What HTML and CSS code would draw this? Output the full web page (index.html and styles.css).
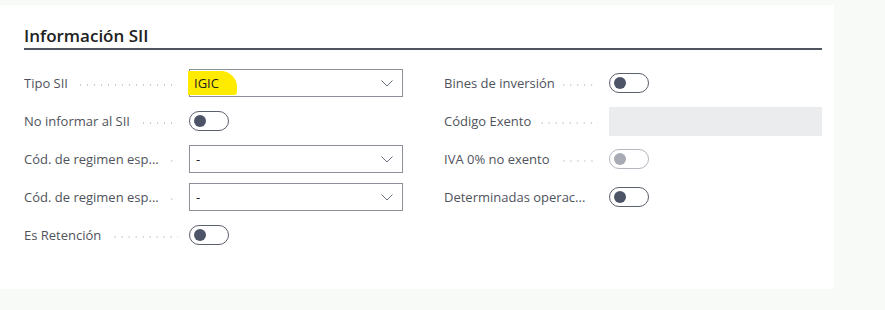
FILE: index.html
```html
<!DOCTYPE html>
<html lang="es">
<head>
<meta charset="utf-8">
<link rel="stylesheet" href="styles.css">
</head>
<body>
<div class="page">
  <section class="card">
    <h2 class="title">Información SII</h2>
    <div class="grid">
      <div class="col">
        <div class="field">
          <div class="label"><span class="text">Tipo SII</span><span class="dots"></span></div>
          <div class="select"><span class="value hl">IGIC</span>
            <svg class="chev" width="12" height="7" viewBox="0 0 12 7"><path d="M0.5 0.5 L6 6 L11.5 0.5" fill="none" stroke="#6a7080" stroke-width="1"/></svg>
          </div>
        </div>
        <div class="field">
          <div class="label"><span class="text">No informar al SII</span><span class="dots"></span></div>
          <div class="toggle"><span class="knob"></span></div>
        </div>
        <div class="field">
          <div class="label"><span class="text">Cód. de regimen esp...</span><span class="dots"></span></div>
          <div class="select"><span class="value">-</span>
            <svg class="chev" width="12" height="7" viewBox="0 0 12 7"><path d="M0.5 0.5 L6 6 L11.5 0.5" fill="none" stroke="#6a7080" stroke-width="1"/></svg>
          </div>
        </div>
        <div class="field">
          <div class="label"><span class="text">Cód. de regimen esp...</span><span class="dots"></span></div>
          <div class="select"><span class="value">-</span>
            <svg class="chev" width="12" height="7" viewBox="0 0 12 7"><path d="M0.5 0.5 L6 6 L11.5 0.5" fill="none" stroke="#6a7080" stroke-width="1"/></svg>
          </div>
        </div>
        <div class="field">
          <div class="label"><span class="text">Es Retención</span><span class="dots"></span></div>
          <div class="toggle"><span class="knob"></span></div>
        </div>
      </div>
      <div class="col">
        <div class="field">
          <div class="label"><span class="text">Bines de inversión</span><span class="dots"></span></div>
          <div class="toggle"><span class="knob"></span></div>
        </div>
        <div class="field">
          <div class="label"><span class="text">Código Exento</span><span class="dots"></span></div>
          <div class="readonly"></div>
        </div>
        <div class="field">
          <div class="label"><span class="text">IVA 0% no exento</span><span class="dots"></span></div>
          <div class="toggle disabled"><span class="knob"></span></div>
        </div>
        <div class="field">
          <div class="label"><span class="text">Determinadas operac...</span><span class="dots"></span></div>
          <div class="toggle"><span class="knob"></span></div>
        </div>
      </div>
    </div>
  </section>
</div>
</body>
</html>
```

FILE: styles.css
```css
html, body {
  margin: 0;
  padding: 0;
  background: #f8faf7;
  width: 885px;
  height: 310px;
  overflow: hidden;
  font-family: "Open Sans", "Noto Sans", sans-serif;
}
.page {
  padding-top: 5px;
}
.card {
  width: 834px;
  height: 284px;
  box-sizing: border-box;
  background: #ffffff;
  padding: 0 12px 0 24px;
}
.title {
  margin: 0;
  padding-top: 19px;
  height: 24px;
  font-size: 17px;
  font-weight: 600;
  color: #212121;
  line-height: 24px;
  border-bottom: 2px solid #50545f;
  padding-bottom: 0;
}
.grid {
  display: grid;
  grid-template-columns: 379px 378px;
  column-gap: 41px;
  margin-top: 14px;
}
.field {
  display: flex;
  align-items: center;
  height: 38px;
}
.label {
  flex: 0 0 165px;
  display: flex;
  align-items: center;
  padding-right: 11px;
  box-sizing: border-box;
  min-width: 0;
}
.text {
  font-size: 13px;
  color: #4f535c;
  white-space: nowrap;
  padding-right: 8px;
}
.dots {
  flex: 1;
  height: 2px;
  margin-top: 4px;
  background-image: linear-gradient(to right, #cbcccf 0 1.5px, transparent 1.5px);
  background-size: 7px 2px;
  background-repeat: repeat-x;
  background-position: right;
}
.select {
  flex: 1;
  height: 28px;
  box-sizing: border-box;
  border: 1px solid #8c9099;
  display: flex;
  align-items: center;
  justify-content: space-between;
  padding: 0 9px 0 6px;
}
.value {
  font-size: 13px;
  color: #212121;
}
.value.hl {
  background: #ffeb00;
  padding: 3px 18px 3px 6px;
  margin-left: -8px;
  border-radius: 0 16px 3px 0;
}
.chev {
  display: block;
}
.toggle {
  width: 40px;
  height: 20px;
  box-sizing: border-box;
  border: 1px solid #5b606d;
  border-radius: 10px;
  display: flex;
  align-items: center;
  padding-left: 4px;
}
.knob {
  width: 12px;
  height: 12px;
  border-radius: 50%;
  background: #4e5468;
}
.toggle.disabled {
  border-color: #b4b7be;
}
.toggle.disabled .knob {
  background: #a8abb4;
}
.readonly {
  flex: 1;
  height: 29px;
  background: #ebecee;
}
```
